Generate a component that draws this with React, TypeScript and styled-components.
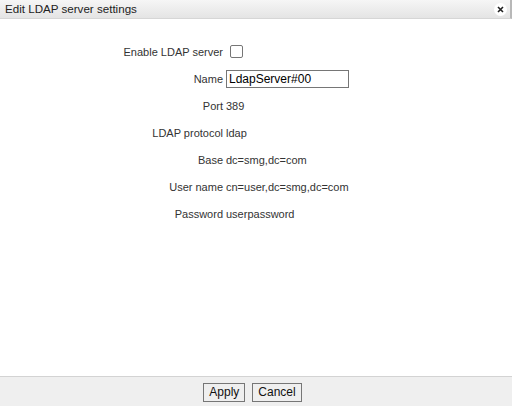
import * as React from 'react';
import styled, { createGlobalStyle } from 'styled-components';

const GlobalStyle = createGlobalStyle`
	html, body {
		margin: 0;
		padding: 0;
		background: #fff;
	}
	body {
		font-family: 'Liberation Sans', Arial, sans-serif;
	}
`;

const Dialog = styled.div`
	width: 512px;
	height: 406px;
	display: flex;
	flex-direction: column;
	background: #fff;
	overflow: hidden;
`;

const TitleBar = styled.div`
	height: 18px;
	display: flex;
	align-items: center;
	justify-content: space-between;
	padding: 0 0 0 5px;
	background: linear-gradient(#f6f6f6, #e4e4e4);
	border-bottom: 1px solid #d6d6d6;
	border-right: 2px solid #b8b8b8;
	width: 505px;
`;

const Title = styled.span`
	font-size: 11.6px;
	color: #222;
	line-height: 18px;
`;

const CloseButton = styled.span`
	width: 13px;
	height: 13px;
	border-radius: 50%;
	background: #fff;
	display: flex;
	align-items: center;
	justify-content: center;
	margin-right: 3px;
	margin-top: 1px;
`;

const Body = styled.div`
	flex: 1;
	padding-top: 19px;
`;

const Form = styled.div`
	display: grid;
	grid-template-columns: 223px auto;
	column-gap: 3px;
	grid-auto-rows: 27px;
	align-items: center;
	font-size: 11px;
	color: #333;
`;

const Label = styled.span`
	text-align: right;
`;

const Value = styled.span`
	display: flex;
	align-items: center;
`;

const Check = styled.span`
	width: 11px;
	height: 11px;
	border: 1px solid #767676;
	border-radius: 2px;
	margin-left: 4px;
	background: #fff;
`;

const TextInput = styled.input`
	box-sizing: border-box;
	width: 123px;
	height: 18px;
	border: 1px solid #767676;
	padding: 0 2px;
	font-family: 'Liberation Sans', Arial, sans-serif;
	font-size: 12px;
	color: #000;
	outline: none;
	margin: 0;
`;

const Footer = styled.div`
	height: 29px;
	border-top: 1px solid #d3d3d3;
	background: #efefef;
	display: flex;
	justify-content: center;
	align-items: center;
	gap: 7px;
	padding-right: 7px;
`;

const Button = styled.button`
	height: 19px;
	padding: 0 5px;
	border: 1px solid #767676;
	border-radius: 0;
	background: #efefef;
	font-family: 'Liberation Sans', Arial, sans-serif;
	font-size: 12px;
	color: #111;
	margin-top: 1px;
`;

interface IField {
	label: string;
	value: string;
}

const fields: IField[] = [
	{ label: 'Port', value: '389' },
	{ label: 'LDAP protocol', value: 'ldap' },
	{ label: 'Base', value: 'dc=smg,dc=com' },
	{ label: 'User name', value: 'cn=user,dc=smg,dc=com' },
	{ label: 'Password', value: 'userpassword' },
];

export default function App() {
	return (
		<Dialog>
			<GlobalStyle />
			<TitleBar>
				<Title>Edit LDAP server settings</Title>
				<CloseButton>
					<svg width="7" height="7" viewBox="0 0 7 7">
						<path d="M1 1L6 6M6 1L1 6" stroke="#222" strokeWidth="1.6" />
					</svg>
				</CloseButton>
			</TitleBar>
			<Body>
				<Form>
					<Label>Enable LDAP server</Label>
					<Value>
						<Check />
					</Value>
					<Label>Name</Label>
					<Value>
						<TextInput defaultValue="LdapServer#00" />
					</Value>
					{fields.map((f) => (
						<React.Fragment key={f.label}>
							<Label>{f.label}</Label>
							<Value>{f.value}</Value>
						</React.Fragment>
					))}
				</Form>
			</Body>
			<Footer>
				<Button>Apply</Button>
				<Button>Cancel</Button>
			</Footer>
		</Dialog>
	);
}
